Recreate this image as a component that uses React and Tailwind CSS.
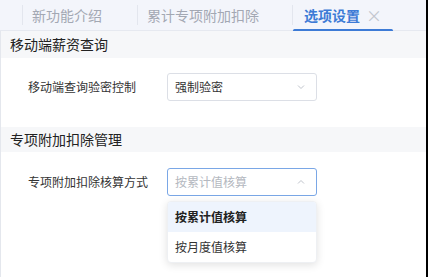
import React from "react";

const font = { fontFamily: '"Noto Sans CJK SC", "Noto Sans", sans-serif' };

function Chevron({ up }) {
  return (
    <svg width="10" height="10" viewBox="0 0 10 10" className="text-[#c0c4cc]">
      <path
        d={up ? "M2 6.5 L5 3.5 L8 6.5" : "M2 3.5 L5 6.5 L8 3.5"}
        fill="none"
        stroke="currentColor"
        strokeWidth="1"
      />
    </svg>
  );
}

export default function App() {
  const tabs = [
    { label: "新功能介绍", active: false, w: "w-[115px]" },
    { label: "累计专项附加扣除", active: false, w: "w-[155px]" },
    { label: "选项设置", active: true, w: "w-[101px]" },
  ];

  return (
    <div
      className="w-[428px] h-[277px] bg-white flex overflow-hidden"
      style={font}
    >
      <div className="flex-1 flex flex-col">
        {/* Tabs */}
        <div className="h-[31px] bg-[#f3f5fb] border-b border-[#e6e9f0] flex items-stretch pl-[22px]">
          {tabs.map((t) => (
            <div
              key={t.label}
              className={`relative flex items-center border-l border-[#e3e6ee] pl-[9px] my-[5px] ${t.w}`}
            >
              <span
                className={`text-[14px] leading-none ${
                  t.active ? "text-[#3d7bd6] font-bold pl-[2px]" : "text-[#a3a8b3]"
                }`}
              >
                {t.label}
              </span>
              {t.active && (
                <>
                  <span className="ml-[6px] text-[#c2c6ce] text-[16px] leading-none">×</span>
                  <div className="absolute left-0 right-0 bottom-[-7px] h-[3px] bg-[#3d7bd6] rounded-full" />
                </>
              )}
            </div>
          ))}
        </div>

        <div className="flex-1 flex flex-col border-l border-[#e4e7ed] relative">
          {/* Section 1 */}
          <div className="h-[27px] bg-[#f6f7f9] flex items-center pl-[9px] text-[14px] text-[#222]">
            移动端薪资查询
          </div>
          <div className="h-[69px] flex items-start pt-[15px] pl-[27px]">
            <span className="w-[139px] h-[28px] flex items-center text-[12px] text-[#333]">移动端查询验密控制</span>
            <div className="w-[150px] h-[28px] border border-[#dcdfe6] rounded-[3px] flex items-center justify-between pl-[7px] pr-[10px]">
              <span className="text-[12px] text-[#333]">强制验密</span>
              <Chevron />
            </div>
          </div>

          {/* Section 2 */}
          <div className="h-[25px] bg-[#f6f7f9] flex items-center pl-[9px] text-[14px] text-[#222]">
            专项附加扣除管理
          </div>
          <div className="h-[59px] flex items-start pt-[16px] pl-[27px]">
            <span className="w-[139px] h-[28px] flex items-center text-[12px] text-[#333]">专项附加扣除核算方式</span>
            <div className="relative w-[150px] h-[28px] border border-[#7aa7e6] rounded-[3px] flex items-center justify-between pl-[7px] pr-[10px]">
              <span className="text-[12px] text-[#b4b8c0]">按累计值核算</span>
              <Chevron up />
              <div className="absolute left-[-1px] top-[32px] w-[150px] bg-white rounded-[4px] shadow-[0_2px_8px_rgba(0,0,0,0.12)] border border-[#eef0f3] overflow-hidden">
                <div className="h-[30px] flex items-center pl-[7px] bg-[#eef4fd] text-[12px] font-bold text-[#222]">
                  按累计值核算
                </div>
                <div className="h-[30px] flex items-center pl-[7px] text-[12px] text-[#333]">
                  按月度值核算
                </div>
              </div>
            </div>
          </div>
          <div className="flex-1" />
        </div>
      </div>
      <div className="w-[2px] bg-black" />
    </div>
  );
}
